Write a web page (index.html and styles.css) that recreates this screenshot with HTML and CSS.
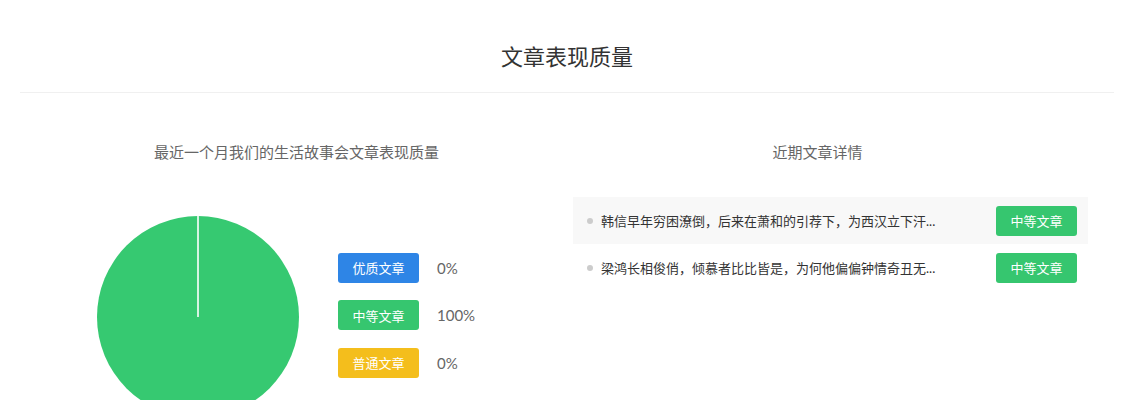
FILE: index.html
```html
<!DOCTYPE html>
<html lang="zh-CN">
<head>
<meta charset="utf-8">
<title>文章表现质量</title>
<link rel="stylesheet" href="styles.css">
</head>
<body>
<div class="page">
  <h1 class="title">文章表现质量</h1>
  <div class="cols">
    <section class="col-left">
      <h2 class="sub">最近一个月我们的生活故事会文章表现质量</h2>
      <div class="chart">
        <svg class="pie" width="202" height="202" viewBox="0 0 202 202">
          <circle cx="101" cy="101" r="101" fill="#36c971"/>
          <line x1="101" y1="0" x2="101" y2="101" stroke="#ffffff" stroke-width="1.6"/>
        </svg>
        <div class="legend">
          <div class="legend-row"><span class="badge blue">优质文章</span><span class="pct">0%</span></div>
          <div class="legend-row"><span class="badge green">中等文章</span><span class="pct">100%</span></div>
          <div class="legend-row"><span class="badge yellow">普通文章</span><span class="pct">0%</span></div>
        </div>
      </div>
    </section>
    <section class="col-right">
      <h2 class="sub sub-right">近期文章详情</h2>
      <ul class="list">
        <li class="item item-active"><span class="dot"></span><span class="text">韩信早年穷困潦倒，后来在萧和的引荐下，为西汉立下汗...</span><span class="badge green">中等文章</span></li>
        <li class="item"><span class="dot"></span><span class="text">梁鸿长相俊俏，倾慕者比比皆是，为何他偏偏钟情奇丑无...</span><span class="badge green">中等文章</span></li>
      </ul>
    </section>
  </div>
</div>
</body>
</html>
```
FILE: styles.css
```css
* { box-sizing: border-box; }
html, body { margin: 0; padding: 0; background: #fff; }
body {
  font-family: "Lato", "Noto Sans CJK SC", sans-serif;
  color: #333;
}
.page { padding: 0 20px; }
.title {
  margin: 0;
  padding: 44px 0 22px;
  font-size: 22px;
  line-height: 26px;
  font-weight: normal;
  text-align: center;
  color: #333;
  border-bottom: 1px solid #f0f0f0;
}
.cols { display: flex; }
.col-left { width: 553px; }
.col-right { width: 515px; }
.sub {
  margin: 0;
  padding-top: 49px;
  font-size: 15px;
  line-height: 20px;
  font-weight: normal;
  color: #666;
  text-align: center;
}
.sub-right { padding-right: 26px; }
.chart {
  display: flex;
  align-items: center;
  margin-top: 54px;
  padding-left: 77px;
}
.pie { display: block; flex: none; }
.legend {
  display: flex;
  flex-direction: column;
  gap: 17.5px;
  margin-left: 39px;
  margin-top: -4px;
}
.legend-row { display: flex; align-items: center; }
.badge {
  display: inline-flex;
  align-items: center;
  justify-content: center;
  width: 81px;
  height: 30px;
  border-radius: 3px;
  color: #fff;
  font-size: 13px;
  flex: none;
}
.blue { background: #2e85e6; }
.green { background: #36c66f; }
.yellow { background: #f4be1c; }
.pct {
  margin-left: 18px;
  font-size: 15px;
  color: #666;
}
.list {
  list-style: none;
  margin: 35px 0 0;
  padding: 0;
}
.item {
  display: flex;
  align-items: center;
  height: 47px;
  padding: 0 11px 0 14px;
}
.item-active { background: #f8f8f8; }
.dot {
  width: 6px;
  height: 6px;
  border-radius: 50%;
  background: #cccccc;
  flex: none;
}
.text {
  flex: 1;
  margin-left: 8px;
  font-size: 13px;
  color: #333;
  white-space: nowrap;
  overflow: hidden;
}
```
